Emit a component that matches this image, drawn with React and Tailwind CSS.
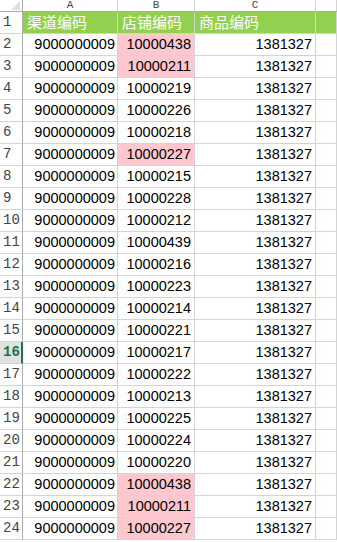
import React from 'react';

const rows = [
  ['9000000009', '10000438', '1381327', true],
  ['9000000009', '10000211', '1381327', true],
  ['9000000009', '10000219', '1381327', false],
  ['9000000009', '10000226', '1381327', false],
  ['9000000009', '10000218', '1381327', false],
  ['9000000009', '10000227', '1381327', true],
  ['9000000009', '10000215', '1381327', false],
  ['9000000009', '10000228', '1381327', false],
  ['9000000009', '10000212', '1381327', false],
  ['9000000009', '10000439', '1381327', false],
  ['9000000009', '10000216', '1381327', false],
  ['9000000009', '10000223', '1381327', false],
  ['9000000009', '10000214', '1381327', false],
  ['9000000009', '10000221', '1381327', false],
  ['9000000009', '10000217', '1381327', false],
  ['9000000009', '10000222', '1381327', false],
  ['9000000009', '10000213', '1381327', false],
  ['9000000009', '10000225', '1381327', false],
  ['9000000009', '10000224', '1381327', false],
  ['9000000009', '10000220', '1381327', false],
  ['9000000009', '10000438', '1381327', true],
  ['9000000009', '10000211', '1381327', true],
  ['9000000009', '10000227', '1381327', true],
];

const grid = 'grid grid-cols-[23px_95px_77px_121px_1fr]';
const mono = "font-['Liberation_Mono',monospace]";
const cell = "h-[22px] border-b border-r border-[#d4d4d4] flex items-center font-['Liberation_Sans',sans-serif] text-[14.5px] text-black";

const RowHead = ({ n }) => {
  const active = n === 16;
  return (
    <div
      className={`h-[22px] border-b border-[#d4d4d4] flex items-center pl-[3px] ${mono} text-[14px] ${
        active
          ? 'bg-[#e1e1e1] text-[#217346] font-bold border-r-2 border-r-[#217346]'
          : 'bg-white text-[#444] border-r border-r-[#ababab]'
      }`}
    >
      {n}
    </div>
  );
};

export default function App() {
  return (
    <div className="w-[337px] h-[542px] overflow-hidden bg-white">
      {/* column headers */}
      <div className={`${grid} h-[12px] border-b border-[#ababab]`}>
        <div className="relative border-r border-[#ababab] bg-white">
          <div className="absolute right-[2px] bottom-[1px] w-0 h-0 border-l-[9px] border-l-transparent border-b-[9px] border-b-[#dfdfdf]" />
        </div>
        {['A', 'B', 'C', ''].map((c, i) => (
          <div
            key={i}
            className={`border-r border-[#d4d4d4] flex items-start justify-center ${mono} text-[11px] leading-[11px] text-[#444]`}
          >
            {c}
          </div>
        ))}
      </div>

      {/* row 1 */}
      <div className={grid}>
        <RowHead n={1} />
        {['渠道编码', '店铺编码', '商品编码', ''].map((t, i) => (
          <div
            key={i}
            className={`h-[22px] bg-[#92d050] border-b border-r border-[#d4d4d4] flex items-center pl-[4px] font-['Noto_Sans_CJK_SC',sans-serif] text-[15px] text-white`}
          >
            {t}
          </div>
        ))}
      </div>

      {rows.map(([a, b, c, hl], i) => (
        <div key={i} className={grid}>
          <RowHead n={i + 2} />
          <div className={`${cell} justify-end pr-[2px]`}>{a}</div>
          <div
            className={`${cell} justify-end pr-[3px] ${hl ? 'bg-[#ffc7ce] text-[#9c0006]' : ''}`}
          >
            {b}
          </div>
          <div className={`${cell} justify-end pr-[3px]`}>{c}</div>
          <div className={cell} />
        </div>
      ))}
    </div>
  );
}
